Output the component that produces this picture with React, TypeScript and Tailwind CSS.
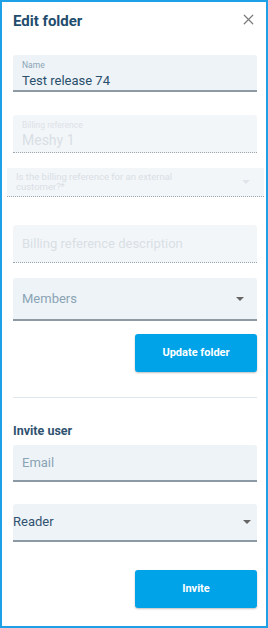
import { X } from 'lucide-react'

function Caret({ className }: { className?: string }) {
	return (
		<svg width="8" height="4" viewBox="0 0 8 4" className={className}>
			<path d="M0 0h8L4 4z" fill="currentColor" />
		</svg>
	)
}

export default function App() {
	return (
		<div className="h-[628px] w-[268px] border-2 border-[#1ea0e6] bg-white font-['Roboto',sans-serif]">
			<div className="flex items-start justify-between pl-[11px] pr-[9px] pt-[9px]">
				<h1 className="text-[15px] font-bold leading-[20px] text-[#1f4d6d]">Edit folder</h1>
				<X className="mt-[0px] h-[17px] w-[17px] text-[#7a7a7a]" strokeWidth={1.7} />
			</div>

			<div className="pl-[11px] pr-[9px]">
				<div className="mt-[24px] h-[37px] rounded-t-[3px] border-b-2 border-[#8e9aa3] bg-[#eef3f7] px-[9px] pt-[5px]">
					<div className="text-[8.5px] leading-[10px] text-[#8aa3b5]">Name</div>
					<div className="mt-[2px] text-[13px] leading-[18px] text-[#2a4f6c]">Test release 74</div>
				</div>

				<div className="mt-[23px] h-[38px] rounded-t-[3px] border-b border-dotted border-[#9aa5ad] bg-[#f3f6f9] px-[9px] pt-[5px]">
					<div className="text-[8.5px] leading-[10px] text-[#dce2e7]">Billing reference</div>
					<div className="mt-[1px] text-[14px] leading-[18px] text-[#d8dfe5]">Meshy 1</div>
				</div>
			</div>

			<div className="mt-[15px] pl-[5px] pr-[2px]">
				<div className="flex h-[29px] items-center justify-between border-b border-dotted border-[#9aa5ad] bg-[#f3f6f9] pl-[9px] pr-[14px]">
					<div className="w-[170px] text-[9.5px] leading-[10px] text-[#d8dfe5]">
						Is the billing reference for an external customer?*
					</div>
					<Caret className="text-[#dfe5ea]" />
				</div>
			</div>

			<div className="pl-[11px] pr-[9px]">
				<div className="mt-[28px] flex h-[38px] items-center rounded-t-[3px] border-b border-dotted border-[#9aa5ad] bg-[#f3f6f9] px-[9px]">
					<span className="text-[13px] text-[#d8dfe5]">Billing reference description</span>
				</div>

				<div className="mt-[15px] flex h-[43px] items-center justify-between rounded-t-[3px] border-b-2 border-[#8e9aa3] bg-[#eef3f7] pl-[9px] pr-[13px]">
					<span className="text-[13px] text-[#8aa3b5]">Members</span>
					<Caret className="text-[#666]" />
				</div>

				<div className="mt-[13px] flex justify-end">
					<button className="h-[38px] w-[122px] rounded-[3px] bg-[#00a3e8] text-[11px] font-bold text-white shadow-[0_1px_2px_rgba(0,0,0,0.25)]">
						Update folder
					</button>
				</div>

				<div className="mt-[25px] h-px bg-[#dfe6ec]" />

				<h2 className="mt-[25px] text-[12.5px] font-bold leading-[16px] text-[#2f5270]">Invite user</h2>

				<div className="mt-[6px] flex h-[37px] items-center rounded-t-[3px] border-b-2 border-[#8e9aa3] bg-[#eef3f7] px-[9px]">
					<span className="text-[13px] text-[#8aa3b5]">Email</span>
				</div>

				<div className="mt-[22px] flex h-[38px] items-center justify-between rounded-t-[3px] border-b-2 border-[#8e9aa3] bg-[#eef3f7] pr-[6px]">
					<span className="text-[13px] text-[#2f5270]">Reader</span>
					<Caret className="text-[#666]" />
				</div>

				<div className="mt-[28px] flex justify-end">
					<button className="h-[38px] w-[122px] rounded-[3px] bg-[#00a3e8] text-[11px] font-bold text-white shadow-[0_1px_2px_rgba(0,0,0,0.25)]">
						Invite
					</button>
				</div>
			</div>
		</div>
	)
}
